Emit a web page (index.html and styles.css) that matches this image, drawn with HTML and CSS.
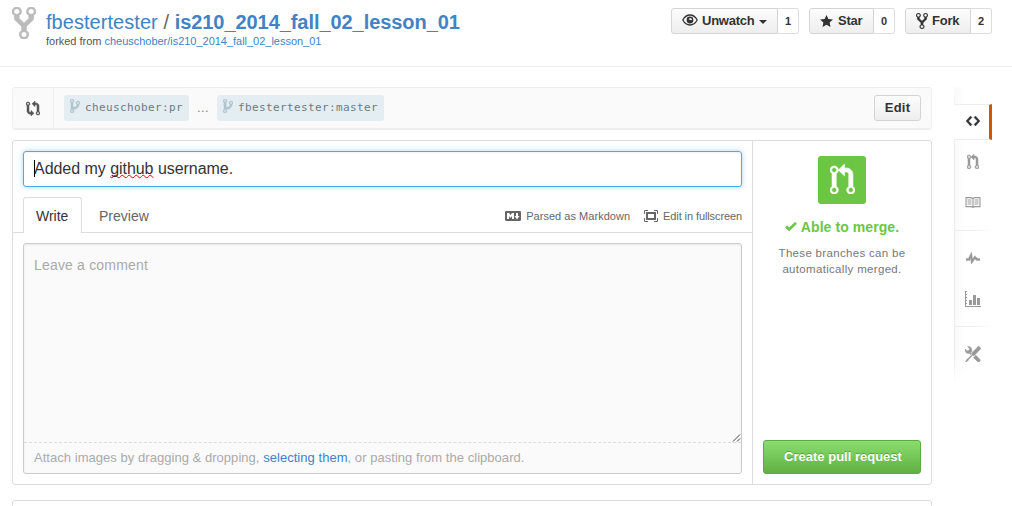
FILE: index.html
```html
<!DOCTYPE html>
<html lang="en">
<head>
<meta charset="utf-8">
<title>Pull request</title>
<link rel="stylesheet" href="styles.css">
</head>
<body>
<svg class="defs" aria-hidden="true">
  <symbol id="fork" viewBox="0 1 10 14" preserveAspectRatio="none"><path d="M8 1a1.993 1.993 0 0 0-1 3.72V6L5 8 3 6V4.72A1.993 1.993 0 0 0 2 1a1.993 1.993 0 0 0-1 3.72V6.5l3 3v1.78A1.993 1.993 0 0 0 5 15a1.993 1.993 0 0 0 1-3.72V9.5l3-3V4.72A1.993 1.993 0 0 0 8 1zM2 4.2C1.34 4.2.8 3.65.8 3c0-.65.55-1.2 1.2-1.2.65 0 1.2.55 1.2 1.2 0 .65-.55 1.2-1.2 1.2zm3 10c-.66 0-1.2-.55-1.2-1.2 0-.65.55-1.2 1.2-1.2.65 0 1.2.55 1.2 1.2 0 .65-.55 1.2-1.2 1.2zm3-10c-.66 0-1.2-.55-1.2-1.2 0-.65.55-1.2 1.2-1.2.65 0 1.2.55 1.2 1.2 0 .65-.55 1.2-1.2 1.2z"/></symbol>
  <symbol id="branch" viewBox="0 1 10 14" preserveAspectRatio="none"><path d="M10 5c0-1.11-.89-2-2-2a1.993 1.993 0 0 0-1 3.72v.3c-.02.52-.23.98-.63 1.38-.4.4-.86.61-1.38.63-.83.02-1.48.16-2 .45V4.72a1.993 1.993 0 0 0-1-3.72C.88 1 0 1.89 0 3a2 2 0 0 0 1 1.72v6.56c-.59.35-1 .99-1 1.72 0 1.11.89 2 2 2 1.11 0 2-.89 2-2 0-.53-.2-1-.53-1.36.09-.06.48-.41.59-.47.25-.11.56-.17.94-.17 1.05-.05 1.95-.45 2.75-1.25S8.95 7.77 9 6.73h-.02C9.59 6.37 10 5.73 10 5zM2 1.8c.66 0 1.2.55 1.2 1.2 0 .65-.55 1.2-1.2 1.2C1.35 4.2.8 3.65.8 3c0-.65.55-1.2 1.2-1.2zm0 12.41c-.66 0-1.2-.55-1.2-1.2 0-.65.55-1.2 1.2-1.2.65 0 1.2.55 1.2 1.2 0 .65-.55 1.2-1.2 1.2zm6-8c-.66 0-1.2-.55-1.2-1.2 0-.65.55-1.2 1.2-1.2.65 0 1.2.55 1.2 1.2 0 .65-.55 1.2-1.2 1.2z"/></symbol>
  <symbol id="pull" viewBox="0 0 12 15" preserveAspectRatio="none"><path d="M11 11.28V5c-.03-.78-.34-1.47-.94-2.06C9.46 2.35 8.78 2.03 8 2H7V0L4 3l3 3V4h1c.27.02.48.11.69.31.21.2.3.42.31.69v6.28A1.993 1.993 0 0 0 10 15a1.993 1.993 0 0 0 1-3.72zm-1 2.92c-.66 0-1.2-.55-1.2-1.2 0-.65.55-1.2 1.2-1.2.65 0 1.2.55 1.2 1.2 0 .65-.55 1.2-1.2 1.2zM4 3c0-1.11-.89-2-2-2a1.993 1.993 0 0 0-1 3.72v6.56A1.993 1.993 0 0 0 2 15a1.993 1.993 0 0 0 1-3.72V4.72c.59-.34 1-.98 1-1.72zm-.8 10c0 .66-.55 1.2-1.2 1.2-.65 0-1.2-.55-1.2-1.2 0-.65.55-1.2 1.2-1.2.65 0 1.2.55 1.2 1.2zM2 4.2C1.34 4.2.8 3.65.8 3c0-.65.55-1.2 1.2-1.2.65 0 1.2.55 1.2 1.2 0 .65-.55 1.2-1.2 1.2z"/></symbol>
</svg>

<header class="repo-head">
  <svg class="mega-icon"><use href="#fork"/></svg>
  <div class="repo-name">
    <h1 class="title"><a>fbestertester</a> <span class="slash">/</span> <a class="strong">is210_2014_fall_02_lesson_01</a></h1>
    <p class="fork-flag">forked from <a>cheuschober/is210_2014_fall_02_lesson_01</a></p>
  </div>
  <ul class="actions">
    <li class="social watch"><span class="social-btn">
      <svg class="eye" viewBox="0 0 16 12"><path d="M.8 6C2.6 2.7 5 1 8 1s5.400 1.700 7.200 5C13.400 9.300 11 11 8 11S2.600 9.300.8 6z" fill="none" stroke="#333" stroke-width="1.300"/><path d="M8 2.600a3.400 3.400 0 1 0 3.400 3.400H8.300L6.600 5.200 8 4z"/><path d="M8 2.600a3.400 3.400 0 0 1 3.400 3.400H10A2 2 0 0 0 8 4z"/></svg>
      Unwatch<i class="caret"></i></span><span class="count">1</span></li>
    <li class="social starred"><span class="social-btn">
      <svg class="star" viewBox="0 1 14 13"><path d="M14 6l-4.900-.64L7 1 4.900 5.360 0 6l3.600 3.260L2.670 14 7 11.670 11.330 14l-.93-4.740z"/></svg>
      Star</span><span class="count">0</span></li>
    <li class="social forks"><span class="social-btn">
      <svg class="fork"><use href="#fork"/></svg>
      Fork</span><span class="count">2</span></li>
  </ul>
</header>

<div class="columns">
  <main class="main">
    <section class="range">
      <div class="range-icon"><svg class="compare" viewBox="0 0 14 16" preserveAspectRatio="none"><path d="M5 12H4c-.27-.02-.48-.11-.69-.31-.21-.2-.3-.42-.31-.69V4.720A1.993 1.993 0 0 0 2 1a1.993 1.993 0 0 0-1 3.720V11c.03.78.34 1.470.94 2.060.6.59 1.280.91 2.060.94h1v2l3-3-3-3v2zM2 1.800c.66 0 1.200.55 1.200 1.200 0 .65-.55 1.200-1.200 1.200C1.350 4.200.8 3.650.8 3c0-.65.55-1.200 1.200-1.200zm11 9.480V5c-.03-.78-.34-1.470-.94-2.060-.6-.59-1.280-.91-2.060-.94H9V0L6 3l3 3V4h1c.27.02.48.11.69.31.21.2.3.42.31.69v6.280A1.993 1.993 0 0 0 12 15a1.993 1.993 0 0 0 1-3.720zm-1 2.920c-.66 0-1.200-.55-1.200-1.200 0-.65.55-1.200 1.200-1.200.65 0 1.200.55 1.200 1.200 0 .65-.55 1.200-1.200 1.200z"/></svg></div>
      <span class="ref"><svg class="branch"><use href="#branch"/></svg>cheuschober:pr</span>
      <span class="dots">...</span>
      <span class="ref"><svg class="branch"><use href="#branch"/></svg>fbestertester:master</span>
      <button class="edit">Edit</button>
    </section>

    <section class="composer">
      <div class="discussion">
        <div class="subject"><i class="cursor"></i>Added my <span class="misspelled">github</span> username.</div>
        <nav class="tabs">
          <a class="tab selected">Write</a>
          <a class="tab">Preview</a>
          <div class="hints">
            <svg class="md" viewBox="0 3 16 10"><path d="M14.850 3H1.150C.52 3 0 3.520 0 4.150v7.690C0 12.480.52 13 1.150 13h13.690c.64 0 1.150-.52 1.150-1.150v-7.700C16 3.520 15.480 3 14.850 3zM9 11H7V8L5.500 9.920 4 8v3H2V5h2l1.500 2L7 5h2v6zm2.990.5L9.500 8H11V5h2v3h1.500l-2.510 3.500z"/></svg>
            <span class="parsed">Parsed as Markdown</span>
            <svg class="full" viewBox="0 0 14 12"><path d="M4 .5H.5V4M10 .5h3.500V4M4 11.500H.5V8M10 11.500h3.500V8" fill="none" stroke="#666"/><path d="M3 3h8v6H3z" fill="none" stroke="#666" stroke-width="2"/></svg>
            <span class="fullscreen">Edit in fullscreen</span>
          </div>
        </nav>
        <div class="write">
          <div class="comment">Leave a comment
            <svg class="grip" viewBox="0 0 9 9"><path d="M1 8.500l7-7M5 8.500l3-3" fill="none" stroke="#444"/></svg>
          </div>
          <p class="attach">Attach images by dragging &amp; dropping, <a>selecting them</a>, or pasting from the clipboard.</p>
        </div>
      </div>
      <aside class="merge">
        <div class="merge-icon"><svg class="merge-pull"><use href="#pull"/></svg></div>
        <h2 class="able"><svg class="check" viewBox="0 3.500 12 9.500"><path d="M11.500 5L4.200 12.200.6 8.600l1.500-1.500 2.100 2.100L10 3.700z" stroke="currentColor" stroke-width=".9"/></svg>Able to merge.</h2>
        <p class="merge-text">These branches can be<br>automatically merged.</p>
        <button class="create">Create pull request</button>
      </aside>
    </section>
    <section class="next"></section>
  </main>

  <nav class="side">
    <a class="side-item active"><svg class="code" viewBox="0 3 14 10" preserveAspectRatio="none"><path d="M9.500 3L8 4.500 11.500 8 8 11.500 9.500 13 14 8 9.500 3zm-5 0L0 8l4.500 5L6 11.500 2.500 8 6 4.500 4.500 3z"/></svg></a>
    <a class="side-item"><svg class="side-pull"><use href="#pull"/></svg></a>
    <a class="side-item"><svg class="book" viewBox="0 0 16 11"><path d="M8 1.500Q7 .6 5.500.6H1v9h5q1.500 0 2 .9.5-.9 2-.9h5v-9h-4.500Q9 .6 8 1.500zv9M2.500 3h4M2.500 5h4M2.500 7h4M9.500 3h4M9.500 5h4M9.500 7h4" fill="none" stroke="#999" stroke-width="1.100"/></svg></a>
    <i class="rule first"></i>
    <a class="side-item"><svg class="pulse" viewBox="0 1.600 14 12" preserveAspectRatio="none"><path d="M11.500 8L8.800 5.400 6.600 8.500 5.500 1.600 2.380 8H0v2h3.600l.9-1.800.9 5.400L9 8.500l1.600 1.500H14V8z" stroke="currentColor" stroke-width=".4"/></svg></a>
    <a class="side-item"><svg class="graph" viewBox="0 0 16 16"><path d="M0 0h2v1H1v2h1v1H1v2h1v1H1v2h1v1H1v2h1v1H1v2h15v1H0zM4 9h3v5H4zM8 4h3v10H8zM12 7h3v7h-3z"/></svg></a>
    <i class="rule second"></i>
    <a class="side-item"><svg class="tools" viewBox="0 0 16 16"><path stroke="currentColor" stroke-width=".5" d="M4.480 7.270c.26.26 1.280 1.330 1.280 1.330l.56-.58-.88-.91 1.690-1.800s-.76-.74-.43-.45c.32-1.190.03-2.510-.87-3.440C4.930.5 3.660.2 2.520.51l1.930 2-.51 1.960-1.890.52-1.930-1.990C-.19 4.170.1 5.480 1 6.400c.94.98 2.290 1.260 3.480.87zm6.440 1.940l-2.330 2.300 3.840 3.980c.31.33.73.49 1.140.49.41 0 .82-.16 1.140-.49.63-.65.63-1.700 0-2.350l-3.790-3.930zM16 2.530L13.550 0 6.330 7.460l.88.91-4.310 4.460-.99.53-1.390 2.270.35.37 2.200-1.440.51-1.020L7.900 9.080l.88.91L16 2.530z"/></svg></a>
  </nav>
</div>
</body>
</html>
```
FILE: styles.css
```css
* { box-sizing: border-box; }
body {
  margin: 0;
  height: 506px;
  overflow: hidden;
  background: #fff;
  color: #333;
  font: 13px/18px "Liberation Sans", Arial, sans-serif;
}
a { color: #4183c4; }
h1, h2, p, ul { margin: 0; padding: 0; font-weight: normal; }
svg { display: block; flex: none; fill: currentColor; }
.defs { position: absolute; width: 0; height: 0; }
button { font: inherit; padding: 0; }

.repo-head {
  display: flex;
  align-items: flex-start;
  height: 67px;
  padding: 7px 20px 0 12px;
  border-bottom: 1px solid #eee;
}
.mega-icon { width: 24px; height: 32px; color: #bbb; stroke: #bbb; stroke-width: .25; }
.repo-name { margin-left: 10px; padding-top: 3px; white-space: nowrap; }
.title { font-size: 20px; line-height: 24px; color: #666; letter-spacing: .05px; }
.strong { font-weight: bold; letter-spacing: -.06px; }
.fork-flag { font-size: 11px; line-height: 14px; color: #555; letter-spacing: -.02px; }
.actions { display: flex; gap: 10px; margin-left: auto; padding-top: 1px; list-style: none; }
.social { display: flex; height: 26px; }
.watch { width: 128px; }
.starred { width: 86px; }
.forks { width: 87px; }
.social-btn {
  display: flex;
  flex: 1;
  align-items: center;
  padding: 0 0 0 10px;
  border: 1px solid #d5d5d5;
  border-radius: 3px 0 0 3px;
  background: linear-gradient(#fcfcfc, #eee);
  font-size: 13px;
  font-weight: bold;
  letter-spacing: -.25px;
}
.count {
  display: flex;
  align-items: center;
  justify-content: center;
  width: 21px;
  border: 1px solid #ddd;
  border-left: 0;
  border-radius: 0 3px 3px 0;
  font-size: 11px;
  font-weight: bold;
}
.eye { width: 16px; height: 12px; margin: -2px 4px 0 0; }
.star { width: 13px; height: 12px; margin-right: 5px; }
.fork { width: 12px; height: 16px; margin-right: 4px; stroke: #333; stroke-width: .2; }
.caret { margin: 1px 0 0 5px; border: 4px solid transparent; border-top-color: #333; border-bottom: 0; }

.columns { display: flex; padding-left: 12px; }
.main { width: 920px; padding-top: 20px; }
.range {
  display: flex;
  align-items: center;
  height: 43px;
  padding-right: 10px;
  border: 1px solid #eee;
  border-bottom-width: 2px;
  border-radius: 3px;
  background: #fafafa;
}
.range-icon {
  display: flex;
  align-items: center;
  justify-content: center;
  align-self: stretch;
  width: 41px;
  margin-right: 10px;
  border-right: 1px solid #eee;
  color: #555;
}
.compare { width: 14px; height: 15px; stroke: #555; stroke-width: .5; }
.ref {
  display: flex;
  align-items: center;
  height: 26px;
  padding: 0 6px;
  border-radius: 3px;
  background: #e4edf2;
  color: #707a80;
  font: 11px/26px "DejaVu Sans Mono", monospace;
  letter-spacing: .38px;
}
.branch { width: 10px; height: 14px; margin: -4px 5px 0 0; color: #b0c4ce; stroke: #b0c4ce; stroke-width: .5; }
.dots { width: 28px; text-align: center; color: #888; letter-spacing: .4px; }
.edit {
  width: 47px;
  height: 26px;
  margin-left: auto;
  border: 1px solid #d5d5d5;
  border-radius: 3px;
  background: linear-gradient(#fcfcfc, #eee);
  color: #333;
  font-weight: bold;
  letter-spacing: .2px;
}

.composer {
  display: flex;
  height: 345px;
  margin-top: 10px;
  border: 1px solid #ddd;
  border-radius: 3px;
}
.discussion { width: 740px; padding-top: 10px; border-right: 1px solid #ddd; }
.subject {
  position: relative;
  height: 36px;
  margin: 0 10px;
  padding-left: 10px;
  border: 1px solid #51a7e8;
  border-radius: 3px;
  box-shadow: 0 0 5px rgba(81, 167, 232, .5), inset 0 1px 2px rgba(0, 0, 0, .05);
  font-size: 16px;
  line-height: 34px;
  letter-spacing: -.04px;
}
.cursor { position: absolute; left: 10px; top: 8px; width: 1px; height: 17px; background: #000; }
.misspelled { text-decoration: underline wavy #f00 1px; text-decoration-skip-ink: none; text-underline-offset: 0; }
.tabs {
  display: flex;
  align-items: flex-start;
  height: 46px;
  padding: 10px 10px 0;
  border-bottom: 1px solid #ddd;
}
.tab { height: 36px; padding: 0 17px; color: #666; font-size: 14px; line-height: 38px; }
.selected {
  width: 59px;
  padding: 0 12px;
  border: 1px solid #ddd;
  border-bottom: 0;
  border-radius: 3px 3px 0 0;
  background: #fff;
  color: #333;
  line-height: 36px;
}
.hints { display: flex; align-items: center; height: 38px; margin-left: auto; color: #666; font-size: 11px; }
.fullscreen { letter-spacing: -.1px; }
.parsed { letter-spacing: .03px; }
.md { width: 16px; height: 10px; margin-right: 5px; }
.full { width: 14px; height: 12px; margin: 0 5px 0 14px; }
.write {
  height: 231px;
  margin: 10px 10px 0;
  border: 1px solid #ccc;
  border-radius: 3px;
  background: #fafafa;
  box-shadow: inset 0 1px 2px rgba(0, 0, 0, .075);
  color: #aaa;
}
.comment {
  position: relative;
  height: 199px;
  padding: 12px 10px 0;
  border-bottom: 1px dashed #ddd;
  font-size: 14px;
  letter-spacing: .18px;
}
.grip { position: absolute; right: 0; bottom: 0; width: 9px; height: 9px; }
.attach { padding-left: 10px; line-height: 30px; letter-spacing: .04px; }
.merge { display: flex; flex-direction: column; align-items: center; width: 178px; padding: 15px 10px 10px; text-align: center; }
.merge-icon {
  display: flex;
  align-items: center;
  justify-content: center;
  width: 48px;
  height: 48px;
  border-radius: 3px;
  background: #6cc644;
  color: #fff;
}
.merge-pull { width: 25px; height: 30px; margin-top: -2px; stroke: #fff; stroke-width: .3; }
.able { display: flex; align-items: center; margin-top: 14px; color: #6cc644; font-size: 14px; font-weight: bold; letter-spacing: .08px; }
.check { width: 12px; height: 10px; margin-right: 4px; }
.merge-text { margin-top: 9px; color: #777; font-size: 11.5px; line-height: 16px; letter-spacing: .32px; white-space: nowrap; }
.create {
  width: 158px;
  height: 34px;
  margin-top: auto;
  padding-left: 2px;
  border: 1px solid #5ca941;
  border-radius: 3px;
  background: linear-gradient(#8add6d, #60b044);
  color: #fff;
  font-weight: bold;
  text-shadow: 0 -1px 0 rgba(0, 0, 0, .25);
}
.next { height: 20px; margin-top: 15px; border: 1px solid #ddd; border-radius: 3px; }

.side {
  display: flex;
  flex-direction: column;
  align-items: flex-start;
  width: 38px;
  height: 302px;
  margin: 20px 0 0 22px;
  padding-top: 17px;
  border-left: 1px solid;
  border-image: linear-gradient(#fff, #eee 20px, #eee 270px, #fff) 1;
  background:
    linear-gradient(rgba(255, 255, 255, 0) 270px, #fff 302px),
    linear-gradient(90deg, #fafafa, #fff 10px);
}
.side-item {
  display: flex;
  align-items: center;
  justify-content: center;
  width: 36px;
  height: 41px;
  color: #999;
}
.active {
  width: 38px;
  height: 36px;
  margin-bottom: 1px;
  margin-left: -1px;
  padding: 0 0 2px 2px;
  border: 1px solid #eee;
  border-width: 1px 3px 1px 0;
  border-right-color: #c9590c;
  background: #fff;
  color: #333;
}
.code { width: 14px; height: 10px; stroke: #333; stroke-width: .4; }
.side-pull { width: 12px; height: 15px; stroke: #999; stroke-width: .5; }
.book { width: 16px; height: 11px; }
.pulse { width: 14px; height: 12px; }
.graph { width: 16px; height: 16px; }
.tools { width: 16px; height: 16px; }
.rule { width: 36px; height: 1px; margin: 7px 0 6px; background: linear-gradient(90deg, #eee, #eee 50%, #fff); }
```
